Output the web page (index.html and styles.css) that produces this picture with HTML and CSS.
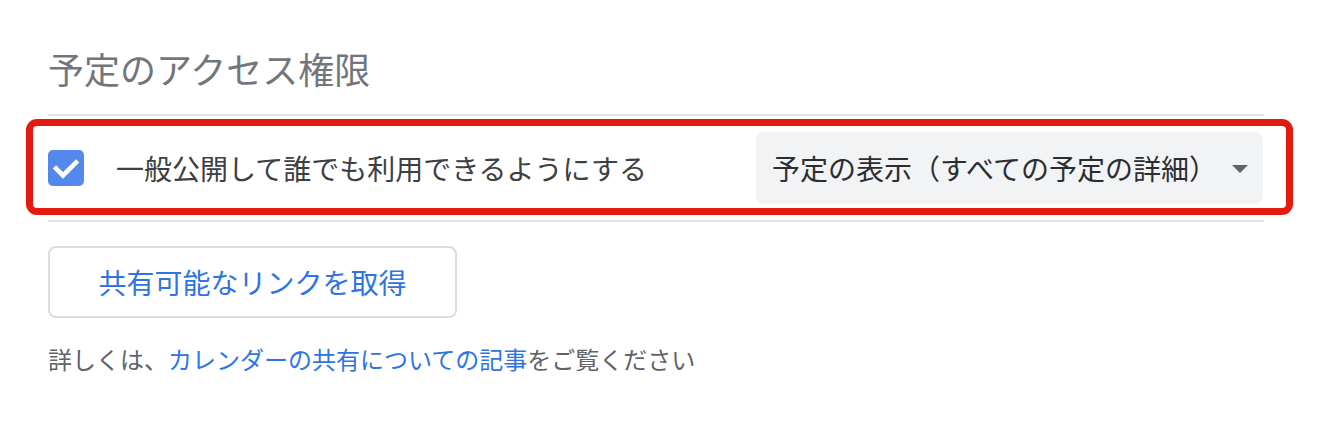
FILE: index.html
```html
<!DOCTYPE html>
<html lang="ja">
<head>
<meta charset="utf-8">
<title>予定のアクセス権限</title>
<link rel="stylesheet" href="styles.css">
</head>
<body>
<div class="page">
  <h2 class="title">予定のアクセス権限</h2>
  <div class="row">
    <span class="checkbox">
      <svg viewBox="0 0 36 36" width="36" height="36"><polyline points="8,18.5 15,25.5 28,12.5" fill="none" stroke="#fff" stroke-width="4.6" stroke-linecap="square"/></svg>
    </span>
    <span class="label">一般公開して誰でも利用できるようにする</span>
    <div class="select">
      <span class="select-text">予定の表示（すべての予定の詳細）</span>
      <span class="arrow"></span>
    </div>
    <div class="highlight"></div>
  </div>
  <button class="link-btn">共有可能なリンクを取得</button>
  <p class="note">詳しくは、<a class="link" href="#">カレンダーの共有についての記事</a>をご覧ください</p>
</div>
</body>
</html>
```
FILE: styles.css
```css
html, body {
  margin: 0;
  padding: 0;
  background: #ffffff;
}
body {
  font-family: "Noto Sans CJK JP", "Noto Sans", sans-serif;
}
.page {
  width: 1216px;
  margin-left: 48px;
  padding-top: 44px;
}
.title {
  margin: 0;
  font-size: 36px;
  line-height: 48px;
  font-weight: 400;
  color: #72767b;
  padding-bottom: 22px;
  border-bottom: 2px solid #e2e3e5;
}
.row {
  position: relative;
  display: flex;
  align-items: center;
  height: 104px;
  border-bottom: 2px solid #e2e3e5;
}
.checkbox {
  width: 36px;
  height: 36px;
  border-radius: 5px;
  background: #5488ec;
  display: flex;
}
.label {
  margin-left: 32px;
  font-size: 28px;
  line-height: 36px;
  color: #3c4043;
}
.select {
  margin-left: auto;
  margin-right: 1px;
  height: 72px;
  display: flex;
  align-items: center;
  gap: 15px;
  padding: 0 15px 0 16px;
  background: #f1f3f4;
  border-radius: 8px;
}
.select-text {
  font-size: 28px;
  line-height: 36px;
  color: #2b2d30;
}
.arrow {
  width: 0;
  height: 0;
  border-left: 8px solid transparent;
  border-right: 8px solid transparent;
  border-top: 8px solid #5f6368;
  margin-top: 2px;
}
.highlight {
  position: absolute;
  left: -22px;
  right: -29px;
  top: 3px;
  bottom: 5px;
  border: 7px solid #e31a0e;
  border-radius: 11px;
  pointer-events: none;
}
.link-btn {
  display: block;
  margin-top: 24px;
  width: 409px;
  height: 72px;
  border: 2px solid #dadce0;
  border-radius: 8px;
  background: #ffffff;
  font-family: "Noto Sans CJK JP", "Noto Sans", sans-serif;
  font-size: 28px;
  color: #2f74e3;
  padding: 0;
}
.note {
  margin: 25px 0 0;
  font-size: 24px;
  line-height: 32px;
  color: #5f6368;
}
.link {
  color: #2f74e3;
  text-decoration: none;
}
```
